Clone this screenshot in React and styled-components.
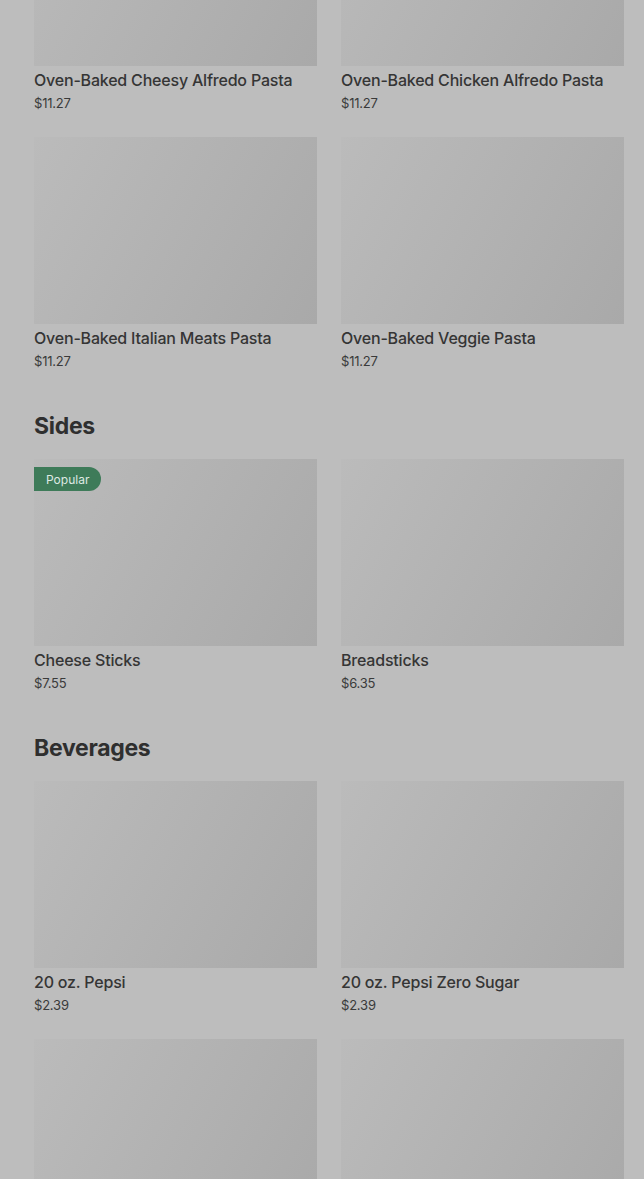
import React from 'react';
import styled, { createGlobalStyle } from 'styled-components';

const GlobalStyle = createGlobalStyle`
  html, body {
    margin: 0;
    padding: 0;
    background: #bdbdbd;
    overflow: hidden;
  }
  body {
    font-family: Inter, "Noto Sans", sans-serif;
    color: #333;
  }
`;

const Page = styled.div`
  padding: 0 20px 0 34px;
  margin-top: -121px;
  height: 1300px;
  overflow: hidden;
`;

const Section = styled.section`
  & + & {
    margin-top: 39px;
  }
`;

const Heading = styled.h2`
  margin: 0 0 17px;
  font-family: Inter, sans-serif;
  font-size: 23px;
  line-height: 32px;
  font-weight: 700;
  color: #2f2f2f;
  letter-spacing: -0.3px;
`;

const Grid = styled.div`
  display: grid;
  grid-template-columns: 283px 283px;
  column-gap: 24px;
  row-gap: 24px;
`;

const Card = styled.div`
  display: flex;
  flex-direction: column;
`;

const Thumb = styled.div`
  position: relative;
  height: 187px;
  background: linear-gradient(118deg, #bbbbbb 0%, #b2b2b2 50%, #a9a9a9 100%);
`;

const Badge = styled.span`
  position: absolute;
  top: 8px;
  left: 0;
  height: 24px;
  padding: 0 12px;
  display: flex;
  align-items: center;
  background: #3e7b59;
  color: #dfe9e3;
  font-size: 12px;
  border-radius: 0 12px 12px 0;
`;

const Name = styled.div`
  margin-top: 2px;
  font-size: 16px;
  line-height: 24px;
  font-weight: 500;
  letter-spacing: -0.2px;
  color: #353535;
`;

const Price = styled.div`
  margin-top: 1px;
  font-size: 13px;
  line-height: 20px;
  letter-spacing: -0.2px;
  color: #3a3a3a;
`;

const menu = [
  {
    title: null,
    items: [
      { name: 'Oven-Baked Cheesy Alfredo Pasta', price: '$11.27' },
      { name: 'Oven-Baked Chicken Alfredo Pasta', price: '$11.27' },
      { name: 'Oven-Baked Italian Meats Pasta', price: '$11.27' },
      { name: 'Oven-Baked Veggie Pasta', price: '$11.27' },
    ],
  },
  {
    title: 'Sides',
    items: [
      { name: 'Cheese Sticks', price: '$7.55', badge: 'Popular' },
      { name: 'Breadsticks', price: '$6.35' },
    ],
  },
  {
    title: 'Beverages',
    items: [
      { name: '20 oz. Pepsi', price: '$2.39' },
      { name: '20 oz. Pepsi Zero Sugar', price: '$2.39' },
      { id: 'more-1' },
      { id: 'more-2' },
    ],
  },
];

const App = () => {
  return (
    <>
      <GlobalStyle />
      <Page>
        {menu.map((section, i) => (
          <Section key={i}>
            {section.title && <Heading>{section.title}</Heading>}
            <Grid>
              {section.items.map((item) => (
                <Card key={item.name || item.id}>
                  <Thumb>{item.badge && <Badge>{item.badge}</Badge>}</Thumb>
                  {item.name && <Name>{item.name}</Name>}
                  {item.price && <Price>{item.price}</Price>}
                </Card>
              ))}
            </Grid>
          </Section>
        ))}
      </Page>
    </>
  );
};

export default App;
